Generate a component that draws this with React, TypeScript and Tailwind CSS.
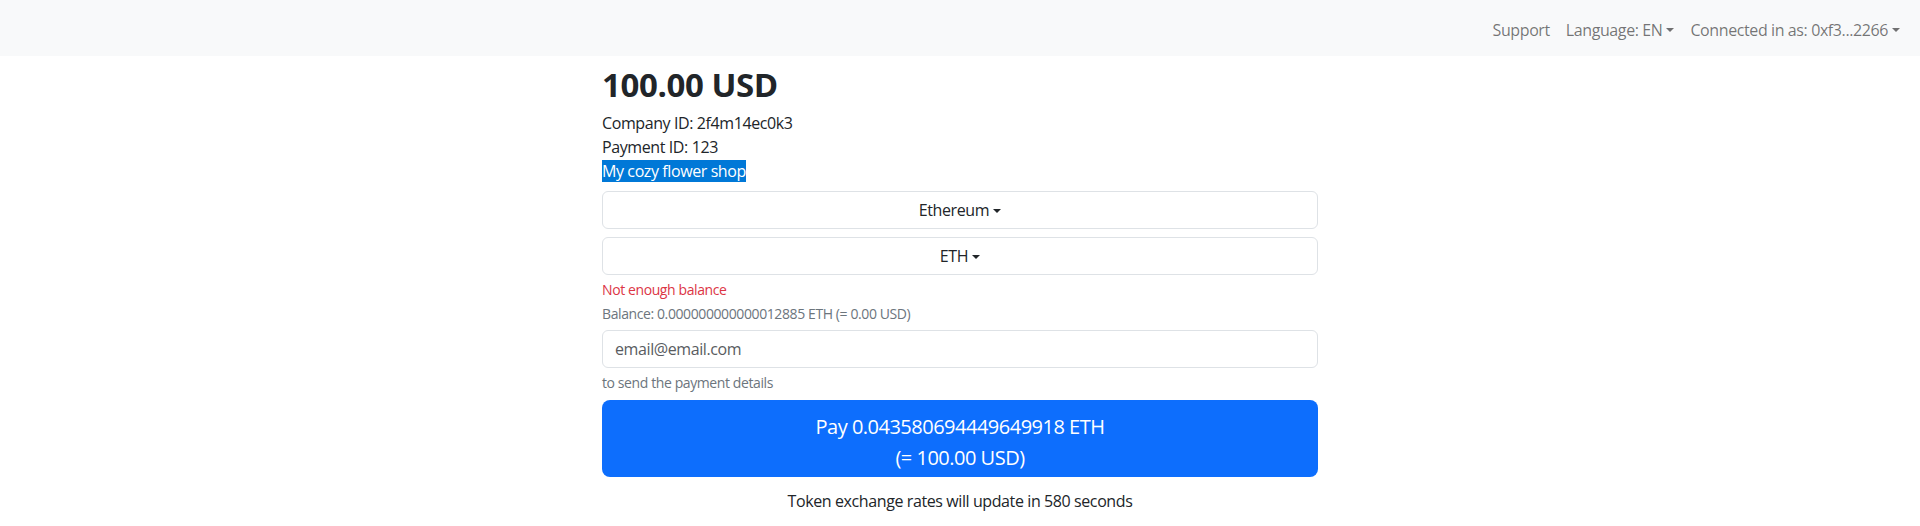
import { useState } from 'react'

function Caret() {
  return (
    <span className="ml-[4px] inline-block align-[0.2em] border-x-[0.3em] border-t-[0.3em] border-x-transparent border-t-current" />
  )
}

function NavBar() {
  return (
    <nav className="h-[56px] bg-[#f8f9fa] flex items-center justify-end pr-[12px]">
      <ul className="flex items-center pt-[3px] text-[16px] text-[rgba(0,0,0,0.55)]">
        <li className="px-[8px]">Support</li>
        <li className="px-[8px]">Language: EN<Caret /></li>
        <li className="px-[8px]">Connected in as: 0xf3...2266<Caret /></li>
      </ul>
    </nav>
  )
}

function SelectButton({ label }: { label: string }) {
  return (
    <button className="w-full h-[38px] border border-[#dee2e6] rounded-[6px] bg-white text-center text-[16px] text-[#212529] tracking-[-0.025em]">
      {label}<Caret />
    </button>
  )
}

export default function App() {
  const [email, setEmail] = useState<string>('')

  return (
    <div className="min-h-[526px] bg-white text-[#212529] font-['Open_Sans',sans-serif] leading-[1.5] tracking-[-0.025em]">
      <NavBar />

      <main className="w-[716px] mx-auto pt-[7px] flex flex-col">
        <h2 className="text-[33px] font-bold leading-[44px] mb-[4px]">100.00 USD</h2>
        <div className="text-[16px] leading-[24px]">Company ID: 2f4m14ec0k3</div>
        <div className="text-[16px] leading-[24px]">Payment ID: 123</div>
        <div className="text-[16px] leading-[24px]">
          <span className="bg-[#0078d7] text-white">My cozy flower shop</span>
        </div>

        <div className="mt-[8px] flex flex-col gap-[8px]">
          <SelectButton label="Ethereum" />
          <SelectButton label="ETH" />
        </div>

        <div className="mt-[4px] text-[14px] leading-[21px] text-[#dc3545]">Not enough balance</div>
        <div className="mt-[3px] text-[14px] leading-[21px] text-[#6c757d]">
          Balance: 0.000000000000012885 ETH (= 0.00 USD)
        </div>

        <input
          type="email"
          name="email"
          value={email}
          onChange={(e) => setEmail(e.target.value)}
          placeholder="email@email.com"
          className="mt-[6px] h-[38px] w-full px-[12px] border border-[#dee2e6] rounded-[6px] text-[16px] tracking-[-0.025em] outline-none placeholder:text-[#595c5f]"
        />
        <div className="mt-[4px] text-[14px] leading-[21px] text-[#6c757d]">to send the payment details</div>

        <button className="mt-[7px] w-full h-[77px] rounded-[8px] bg-[#0d6efd] text-white text-[20px] leading-[31px] px-[16px] pt-[6px] tracking-[-0.025em]">
          Pay 0.043580694449649918 ETH
          <br />
          (= 100.00 USD)
        </button>

        <p className="mt-[12px] text-center text-[16px] leading-[24px]">
          Token exchange rates will update in 580 seconds
        </p>
      </main>
    </div>
  )
}
